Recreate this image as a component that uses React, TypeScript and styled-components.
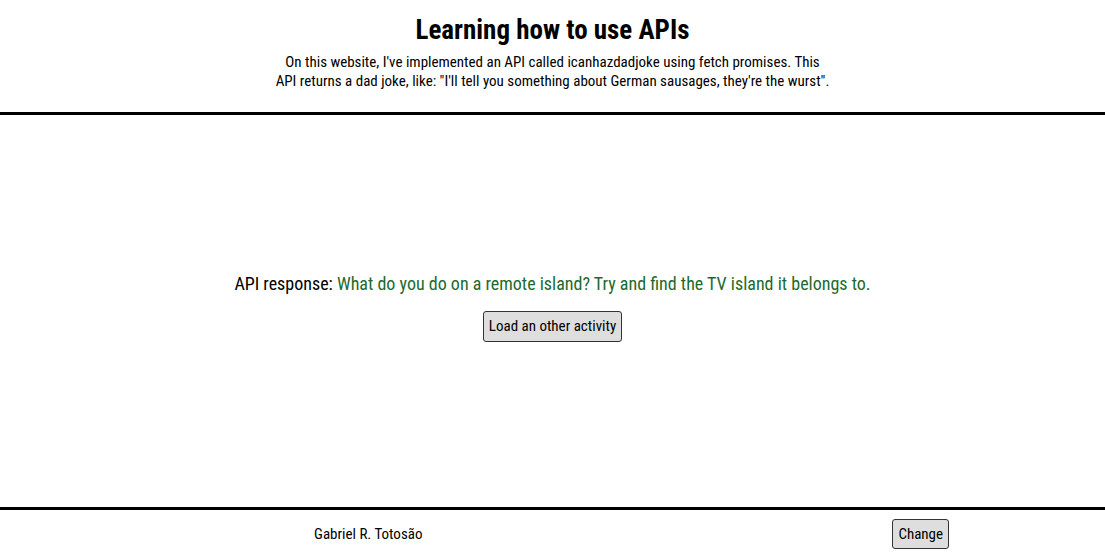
import React from "react";
import styled, { createGlobalStyle } from "styled-components";

const Global = createGlobalStyle`
  html, body { margin: 0; padding: 0; background: #fff; }
  body {
    font-family: "Roboto", "Liberation Sans", Arial, sans-serif;
    font-stretch: condensed;
    color: #000;
  }
`;

const Page = styled.div`
  display: flex;
  flex-direction: column;
  min-height: 558px;
`;

const Header = styled.header`
  display: flex;
  flex-direction: column;
  align-items: center;
  height: 115px;
  box-sizing: border-box;
  padding-top: 13px;
  border-bottom: 3px solid #000;
`;

const Title = styled.h1`
  margin: 0;
  font-size: 27px;
  font-weight: bold;
  line-height: 34px;
`;

const Intro = styled.p`
  margin: 6px 0 0;
  max-width: 556px;
  text-align: center;
  font-size: 15px;
  line-height: 19px;
`;

const Main = styled.main`
  height: 392px;
  display: flex;
  flex-direction: column;
  align-items: center;
  justify-content: center;
  gap: 17px;
  padding-bottom: 8px;
  box-sizing: border-box;
`;

const Response = styled.p`
  margin: 0;
  font-size: 18px;
  line-height: 21px;
`;

const Joke = styled.span`
  color: #1d6a2c;
`;

const Button = styled.button<{ $h: number }>`
  font-family: inherit;
  font-stretch: condensed;
  font-size: 15px;
  color: #000;
  background: #dedede;
  border: 1px solid #333;
  border-radius: 3px;
  padding: 0 5px;
  height: ${(p) => p.$h}px;
  cursor: pointer;
`;

const Footer = styled.footer`
  border-top: 3px solid #000;
  height: 48px;
  display: grid;
  grid-template-columns: 1fr 1fr;
  align-items: center;
`;

const FooterCell = styled.div`
  display: flex;
  justify-content: center;
  padding-left: 184px;
`;

const Author = styled.span`
  font-size: 15px;
`;

export default function App() {
  return (
    <Page>
      <Global />
      <Header>
        <Title>Learning how to use APIs</Title>
        <Intro>
          On this website, I've implemented an API called icanhazdadjoke using fetch promises. This API
          returns a dad joke, like: "I'll tell you something about German sausages, they're the wurst".
        </Intro>
      </Header>
      <Main>
        <Response>
          API response: <Joke>What do you do on a remote island? Try and find the TV island it belongs to.</Joke>
        </Response>
        <Button $h={31}>Load an other activity</Button>
      </Main>
      <Footer>
        <FooterCell>
          <Author>Gabriel R. Totosão</Author>
        </FooterCell>
        <FooterCell>
          <Button $h={30}>Change</Button>
        </FooterCell>
      </Footer>
    </Page>
  );
}
